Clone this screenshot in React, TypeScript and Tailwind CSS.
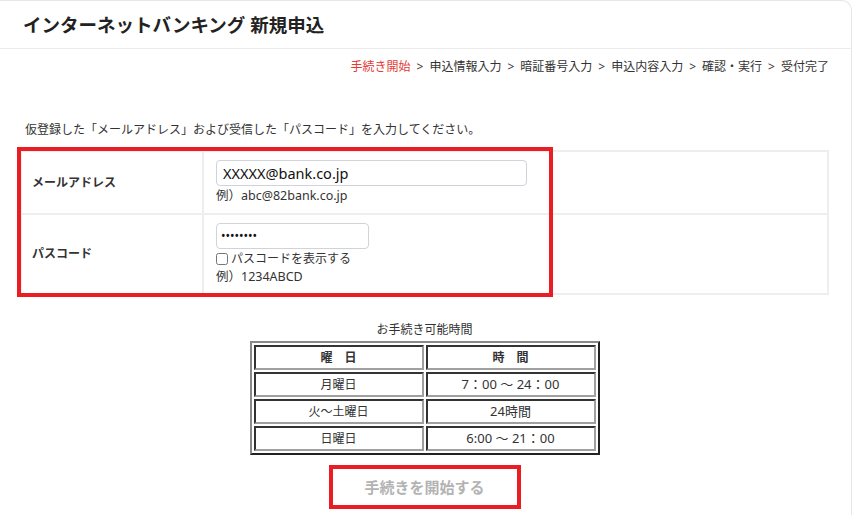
import React from 'react';

const steps = ['申込情報入力', '暗証番号入力', '申込内容入力', '確認・実行', '受付完了'];

const hours = [
    { day: '月曜日', time: '7：00 ～ 24：00' },
    { day: '火～土曜日', time: '24時間' },
    { day: '日曜日', time: '6:00 ～ 21：00' },
];

const cell = 'h-[25px] border-2 border-t-[#333] border-l-[#333] border-b-[#a0a0a0] border-r-[#a0a0a0] text-center align-middle';

export default function App() {
    return (
        <div className="min-h-[515px] bg-white text-[#333] font-['Noto_Sans','Noto_Sans_CJK_JP',sans-serif]">
            <div className="w-[852px] min-h-[515px] border-t border-r border-[#e6e6e6] rounded-tr-[10px]">
                {/* header */}
                <div className="h-[48px] flex items-center pl-[23px] border-b border-[#ececec]">
                    <h1 className="text-[18.5px] font-bold text-[#222]">インターネットバンキング 新規申込</h1>
                </div>

                <div className="pl-[20px] pr-[22px]">
                    {/* breadcrumb */}
                    <div className="pt-[9px] flex justify-end text-[12px] leading-[18px]">
                        <span className="text-[#e53935]">手続き開始</span>
                        {steps.map((s) => (
                            <span key={s} className="text-[#333]">
                                <span className="px-[6px]">&gt;</span>
                                {s}
                            </span>
                        ))}
                    </div>

                    <p className="mt-[45px] pl-[5px] text-[12px] leading-[18px]">
                        仮登録した「メールアドレス」および受信した「パスコード」を入力してください。
                    </p>

                    {/* form */}
                    <div className="relative mt-[11px]">
                        <table className="w-full border-collapse border-2 border-[#eeeeee] text-[12px]">
                            <tbody>
                                <tr className="h-[63px]">
                                    <th className="w-[182px] border-2 border-[#eeeeee] pl-[10px] text-left font-bold">メールアドレス</th>
                                    <td className="border-2 border-[#eeeeee] pl-[12px] py-[7px]">
                                        <input
                                            readOnly
                                            value="XXXXX@bank.co.jp"
                                            className="w-[311px] h-[26px] px-[6px] border border-[#cfd4db] rounded-[4px] text-[14.5px] text-[#111] outline-none"
                                        />
                                        <div className="leading-[18px] mt-[1px] text-[12.5px]">例）abc@82bank.co.jp</div>
                                    </td>
                                </tr>
                                <tr className="h-[80px]">
                                    <th className="border-2 border-[#eeeeee] pl-[10px] text-left font-bold">パスコード</th>
                                    <td className="border-2 border-[#eeeeee] pl-[12px] py-[6px]">
                                        <input
                                            type="password"
                                            readOnly
                                            value="12345678"
                                            className="w-[153px] h-[26px] px-[4px] border border-[#cfd4db] rounded-[4px] text-[12px] text-[#111] outline-none"
                                        />
                                        <label className="flex items-center gap-[3px] leading-[18px] mt-[1px]">
                                            <input type="checkbox" className="w-[12px] h-[12px] m-0" />
                                            パスコードを表示する
                                        </label>
                                        <div className="leading-[18px] text-[12.5px]">例）1234ABCD</div>
                                    </td>
                                </tr>
                            </tbody>
                        </table>
                        <div className="absolute left-[-3px] top-[-3px] w-[536px] h-[150px] border-[4px] border-[#ec1c24] pointer-events-none" />
                    </div>

                    {/* hours */}
                    <div className="mt-[26px] flex flex-col items-center">
                        <div className="text-[12px] leading-[18px]">お手続き可能時間</div>
                        <table className="mt-[2px] w-[350px] border-separate border-spacing-[2px] border-2 border-t-[#8a8a8a] border-l-[#8a8a8a] border-b-[#222] border-r-[#222] text-[12px]">
                            <thead>
                                <tr>
                                    <th className={`${cell} font-bold`}>曜　日</th>
                                    <th className={`${cell} font-bold`}>時　間</th>
                                </tr>
                            </thead>
                            <tbody>
                                {hours.map((h) => (
                                    <tr key={h.day}>
                                        <td className={`${cell} w-1/2`}>{h.day}</td>
                                        <td className={`${cell} text-[13px]`}>{h.time}</td>
                                    </tr>
                                ))}
                            </tbody>
                        </table>

                        <button
                            disabled
                            className="mt-[10px] w-[192px] h-[44px] border-[4px] border-[#ec1c24] bg-white text-[15px] font-bold text-[#b3b3b3]"
                        >
                            手続きを開始する
                        </button>
                    </div>
                </div>
            </div>
        </div>
    );
}
